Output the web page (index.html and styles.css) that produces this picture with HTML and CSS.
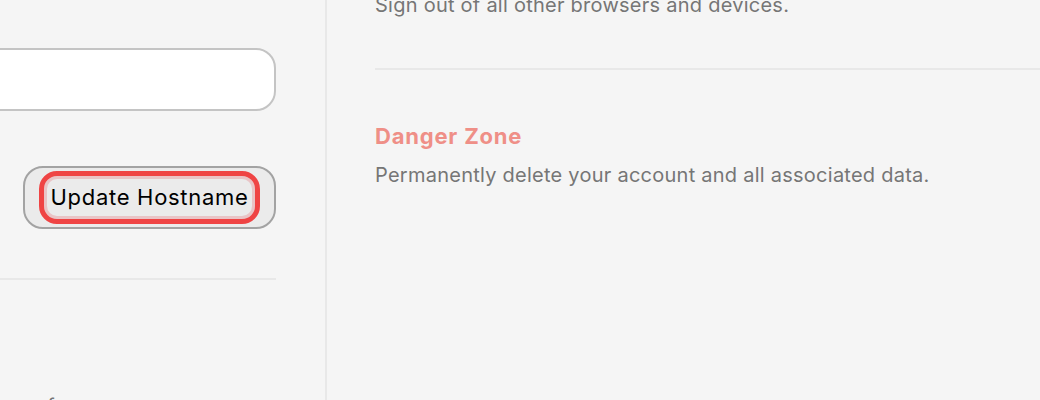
FILE: index.html
```html
<!DOCTYPE html>
<html lang="en">
<head>
<meta charset="utf-8">
<title>Settings</title>
<link rel="stylesheet" href="styles.css">
</head>
<body>
<div class="layout">
  <div class="left-col">
    <section class="host-section">
      <input class="text-input" type="text" value="" aria-label="Hostname">
      <div class="actions">
        <button class="btn" type="button"><span class="btn-ring">Update Hostname</span></button>
      </div>
    </section>
    <section class="next-section">
      <p class="muted">Manage your theme and display preferences</p>
    </section>
  </div>
  <div class="right-col">
    <section class="sessions">
      <p class="muted">Sign out of all other browsers and devices.</p>
    </section>
    <section class="danger">
      <h2 class="danger-title">Danger Zone</h2>
      <p class="muted">Permanently delete your account and all associated data.</p>
    </section>
  </div>
</div>
</body>
</html>
```

FILE: styles.css
```css
html, body {
  margin: 0;
  padding: 0;
  background: #f5f5f5;
  overflow: hidden;
}

body {
  font-family: Inter, "Liberation Sans", sans-serif;
  width: 1040px;
  height: 400px;
}

.layout {
  display: grid;
  grid-template-columns: 627px 1fr;
  margin-left: -300px;
  margin-top: -9px;
  height: 409px;
  overflow: hidden;
}

.left-col {
  padding-right: 49px;
  border-right: 2px solid #e8e8e8;
  display: flex;
  flex-direction: column;
}

.host-section {
  display: flex;
  flex-direction: column;
  padding-top: 57px;
  padding-bottom: 49px;
  border-bottom: 2px solid #e8e8e8;
}

.text-input {
  box-sizing: border-box;
  height: 63px;
  width: 100%;
  border: 2px solid #c4c4c4;
  border-radius: 20px;
  background: #ffffff;
  font: inherit;
  padding: 0 16px;
}

.actions {
  display: flex;
  justify-content: flex-end;
  margin-top: 55px;
}

.btn {
  box-sizing: border-box;
  height: 63px;
  width: 253px;
  padding: 3px 14px;
  border: 2px solid #a3a3a3;
  border-radius: 20px;
  background: #ebebeb;
  font-family: Inter, "Liberation Sans", sans-serif;
  font-size: 22px;
  letter-spacing: 0.7px;
  color: #000;
  display: flex;
  align-items: stretch;
}

.btn-ring {
  flex: 1;
  display: flex;
  align-items: center;
  justify-content: center;
  border: 5px solid #ef4444;
  border-radius: 18px;
  box-shadow: inset 0 0 0 3px #e9c4c6;
  padding: 0 3px 1px;
  white-space: nowrap;
}

.next-section {
  padding-top: 112px;
}

.muted {
  margin: 0;
  font-size: 20px;
  line-height: 28px;
  letter-spacing: 0.25px;
  color: #767676;
}

.right-col {
  padding-left: 48px;
  display: flex;
  flex-direction: column;
}

.sessions {
  padding-bottom: 49px;
  border-bottom: 2px solid #e8e8e8;
}

.danger {
  padding-top: 52px;
}

.danger-title {
  margin: 0 0 11px;
  font-size: 22px;
  line-height: 28px;
  letter-spacing: 0.8px;
  font-weight: 700;
  color: #ef8f87;
}
```
